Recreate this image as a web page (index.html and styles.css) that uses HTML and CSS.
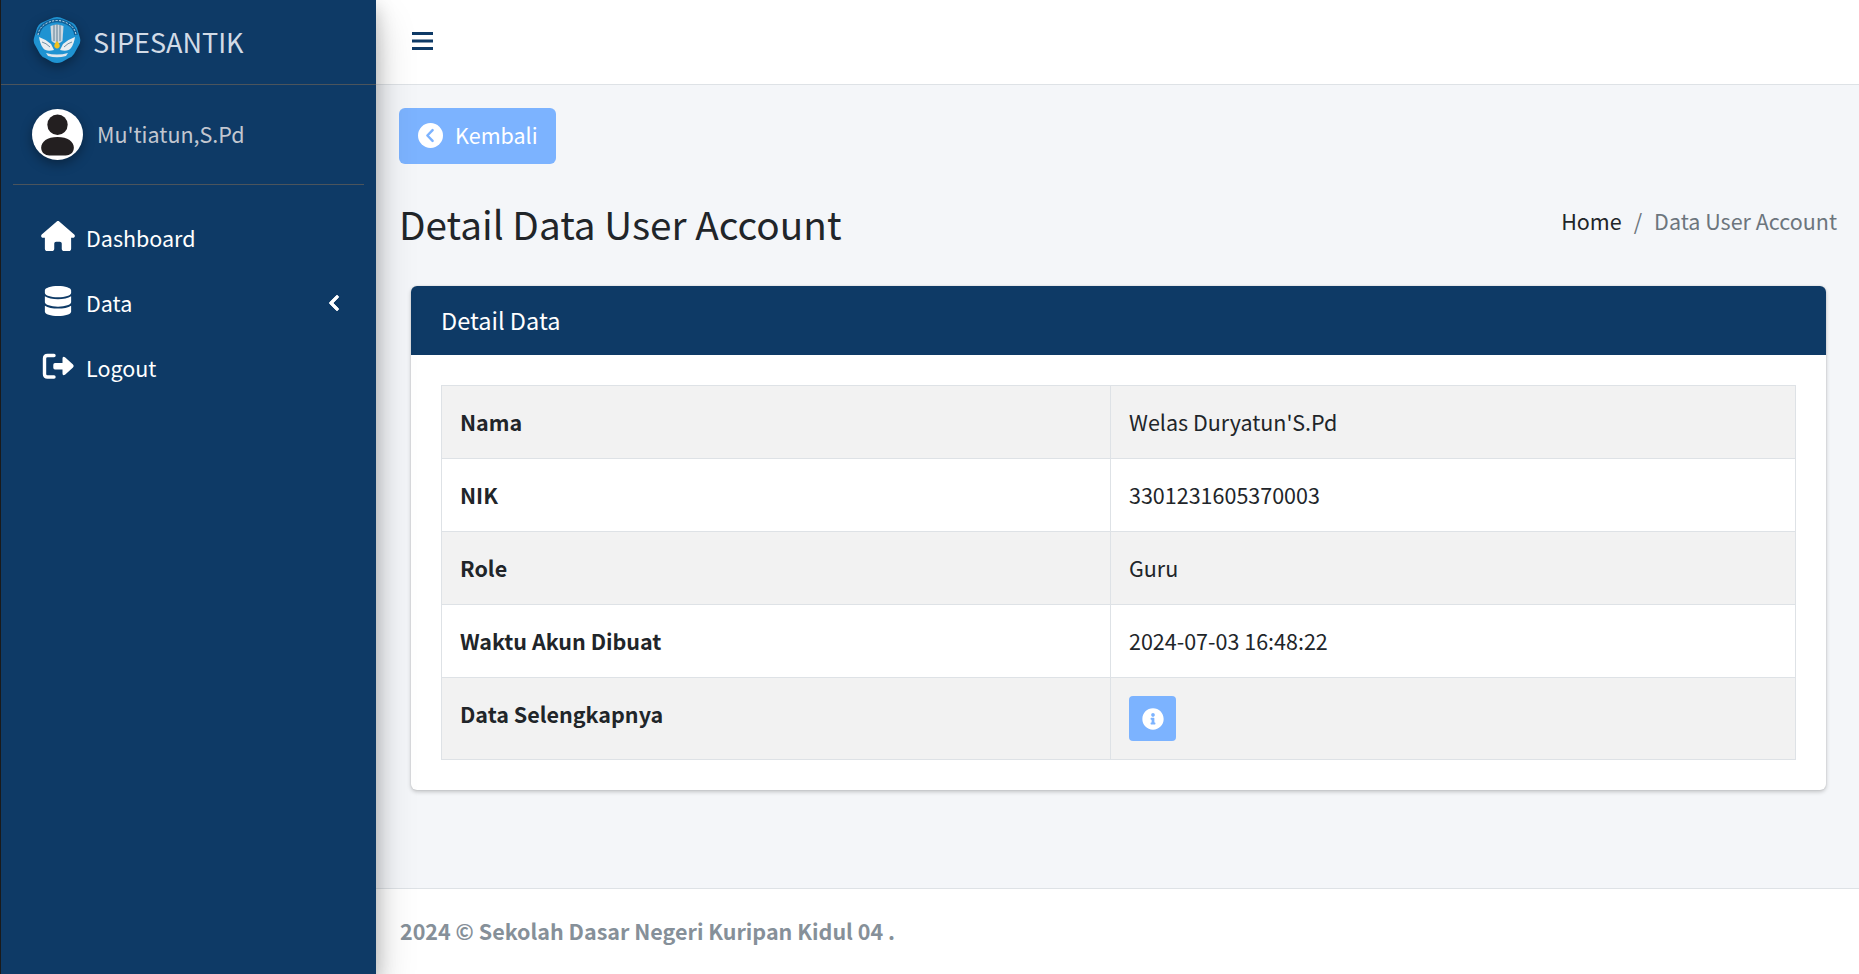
FILE: index.html
```html
<!DOCTYPE html>
<html lang="id">
<head>
<meta charset="utf-8">
<title>SIPESANTIK</title>
<link rel="stylesheet" href="styles.css">
</head>
<body>
<div class="app">
  <aside class="sidebar">
    <div class="brand">
      <svg class="brand-logo" viewBox="0 0 48 48" aria-hidden="true">
        <path d="M24 1 Q27 1 31 3 L40 7 Q43 9 44 12 L47 22 Q48 26 46 29 L41 38 Q39 41 36 42 L29 46 Q24 48 19 46 L12 42 Q9 41 7 38 L2 29 Q0 26 1 22 L4 12 Q5 9 8 7 L17 3 Q21 1 24 1 Z" fill="#1f93d2"/>
        <path d="M5 19 Q6 11 14 7 Q24 2 34 7 Q42 11 43 19" fill="none" stroke="#0f5f96" stroke-width="3.500"/>
        <path d="M5 19 Q6 11 14 7 Q24 2 34 7 Q42 11 43 19" fill="none" stroke="#cfe4f1" stroke-width="1" stroke-dasharray="2 1.500"/>
        <path d="M17.500 10 Q24 7 30.500 10 L29.500 25 Q24 30 18.500 25 Z" fill="#cfd8df"/>
        <path d="M21 9 V25 M24 8 V27 M27 9 V25" stroke="#5f7f95" stroke-width="1"/>
        <path d="M6 21 Q12 23 18 28 L21 34 Q13 36 10 32 Q7 28 6 21 Z" fill="#e9edf0"/>
        <path d="M42 21 Q36 23 30 28 L27 34 Q35 36 38 32 Q41 28 42 21 Z" fill="#e9edf0"/>
        <path d="M9 26 Q13 27 17 31 M39 26 Q35 27 31 31" stroke="#6f8ea3" stroke-width="1" fill="none"/>
        <path d="M24 25 Q27.500 28.500 26.500 31 Q24 34 21.500 31 Q20.500 28.500 24 25 Z" fill="#f2c11e"/>
        <path d="M13 37 Q24 40 35 37 L33 40 Q24 42.500 15 40 Z" fill="#dfe6ec"/>
      </svg>
      <span class="brand-text">SIPESANTIK</span>
    </div>
    <div class="user">
      <svg class="avatar" viewBox="0 0 50 50" aria-hidden="true">
        <circle cx="25" cy="25" r="25" fill="#fff"/>
        <circle cx="25" cy="15.500" r="10" fill="#231f20"/>
        <path d="M25 27.500 C15 27.500 9 32 9 38 C9 43 13 45.500 17 45.500 H33 C37 45.500 41 43 41 38 C41 32 35 27.500 25 27.500 Z" fill="#231f20"/>
      </svg>
      <span class="user-name">Mu'tiatun,S.Pd</span>
    </div>
    <nav class="nav">
      <a class="nav-item">
        <svg class="nav-icon" viewBox="0 0 576 512"><path fill="currentColor" d="M575.800 255.500c0 18-15 32.100-32 32.100h-32l.7 160.200c0 2.700-.2 5.400-.5 8.100V472c0 22.100-17.900 40-40 40H456c-1.100 0-2.200 0-3.300-.1-1.400.1-2.800.1-4.200.1H416 392c-22.100 0-40-17.900-40-40V448 384c0-17.700-14.300-32-32-32H256c-17.700 0-32 14.300-32 32v64 24c0 22.100-17.900 40-40 40H160 128.100c-1.500 0-3-.1-4.500-.2-1.200.1-2.400.2-3.600.2H104c-22.100 0-40-17.900-40-40V360c0-.9 0-1.900.1-2.800V287.600H32c-18 0-32-14-32-32.100 0-9 3-17 10-24L266.400 8c7-7 15-8 22-8s15 2 21 7L564.800 231.500c8 7 12 15 11 24z"/></svg>
        <span>Dashboard</span>
      </a>
      <a class="nav-item">
        <svg class="nav-icon" viewBox="0 0 448 512"><path fill="currentColor" d="M448 73.143v45.714C448 159.143 347.667 192 224 192S0 159.143 0 118.857V73.143C0 32.857 100.333 0 224 0s224 32.857 224 73.143zM448 176v102.857C448 319.143 347.667 352 224 352S0 319.143 0 278.857V176c48.125 33.143 136.208 48.572 224 48.572S399.874 209.143 448 176zm0 160v102.857C448 479.143 347.667 512 224 512S0 479.143 0 438.857V336c48.125 33.143 136.208 48.572 224 48.572S399.874 369.143 448 336z"/></svg>
        <span>Data</span>
        <svg class="nav-caret" viewBox="0 0 320 512"><path fill="currentColor" stroke="currentColor" stroke-width="24" stroke-linejoin="round" d="M34.520 239.030L228.870 44.690c9.370-9.370 24.570-9.370 33.940 0l22.670 22.670c9.360 9.360 9.370 24.520.04 33.900L131.490 256l154.020 154.750c9.340 9.380 9.320 24.540-.04 33.900l-22.670 22.670c-9.370 9.370-24.570 9.370-33.940 0L34.520 272.970c-9.370-9.370-9.370-24.570 0-33.940z"/></svg>
      </a>
      <a class="nav-item">
        <svg class="nav-icon" viewBox="0 0 34 30">
          <path d="M13 4.500H6.500Q3.500 4.500 3.500 7.500V23Q3.500 26 6.500 26H13" fill="none" stroke="currentColor" stroke-width="3.400" stroke-linecap="round"/>
          <path fill="currentColor" d="M14 12h7.500V7.500q0-2.500 2.500-1.200l8 7.200q1.500 1.500 0 3l-8 7.200q-2.500 1.300-2.500-1.200V18.500H14q-1.700 0-1.700-1.700v-3.100Q12.300 12 14 12z"/>
        </svg>
        <span>Logout</span>
      </a>
    </nav>
  </aside>
  <div class="main">
    <header class="topbar">
      <svg class="menu-icon" viewBox="0 0 21 18" aria-hidden="true"><path fill="currentColor" d="M0 0h21v3H0zM0 7.500h21v3H0zM0 15h21v3H0z"/></svg>
    </header>
    <main class="content">
      <a class="btn-back">
        <svg class="btn-back-icon" viewBox="0 0 24 24"><circle cx="12" cy="12" r="12" fill="#fff"/><path d="M14 6.800 9 12l5 5.200" fill="none" stroke="#7cb3ff" stroke-width="2.400" stroke-linecap="round" stroke-linejoin="round"/></svg>
        <span class="btn-back-text">Kembali</span>
      </a>
      <div class="page-head">
        <h1 class="page-title">Detail Data User Account</h1>
        <div class="crumbs"><span class="crumb-link">Home</span><span class="crumb-sep">/</span><span>Data User Account</span></div>
      </div>
      <section class="card">
        <div class="card-head">Detail Data</div>
        <div class="card-body">
          <table class="detail">
            <tr><th>Nama</th><td>Welas Duryatun'S.Pd</td></tr>
            <tr><th>NIK</th><td>3301231605370003</td></tr>
            <tr><th>Role</th><td>Guru</td></tr>
            <tr><th>Waktu Akun Dibuat</th><td>2024-07-03 16:48:22</td></tr>
            <tr><th>Data Selengkapnya</th><td><a class="btn-info"><svg viewBox="0 0 512 512"><path fill="#fff" d="M256 8C119.043 8 8 119.083 8 256c0 136.997 111.043 248 248 248s248-111.003 248-248C504 119.083 392.957 8 256 8zm0 110c23.196 0 42 18.804 42 42s-18.804 42-42 42-42-18.804-42-42 18.804-42 42-42zm56 254c0 6.627-5.373 12-12 12h-88c-6.627 0-12-5.373-12-12v-24c0-6.627 5.373-12 12-12h12v-64h-12c-6.627 0-12-5.373-12-12v-24c0-6.627 5.373-12 12-12h64c6.627 0 12 5.373 12 12v100h12c6.627 0 12 5.373 12 12v24z"/></svg></a></td></tr>
          </table>
        </div>
      </section>
    </main>
    <footer class="footer">2024 © Sekolah Dasar Negeri Kuripan Kidul 04 .</footer>
  </div>
</div>
</body>
</html>
```

FILE: styles.css
```css
* { box-sizing: border-box; }
html, body { margin: 0; height: 100%; }
body {
  font-family: "Noto Sans CJK SC", "Noto Sans", sans-serif;
  font-size: 21.5px;
  line-height: 36px;
  color: #212529;
  background: #f4f6f9;
  overflow: hidden;
}
.app { display: flex; height: 974px; }
.sidebar {
  width: 376px;
  flex: none;
  background: #0e3a66;
  border-left: 1px solid #1a1a1a;
  box-shadow: 0 21px 39px rgba(0,0,0,.2), 0 7px 18px rgba(0,0,0,.22);
  position: relative;
  z-index: 2;
}
.brand {
  height: 85px;
  display: flex;
  align-items: center;
  padding: 0 0 0 32px;
  gap: 12px;
  border-bottom: 1px solid #4b545c;
}
.brand-logo { width: 48px; height: 48px; margin-top: -4px; filter: drop-shadow(0 4px 6px rgba(0,0,0,.35)); }
.brand-text { font-size: 27px; color: #d2dbe6; }
.user {
  height: 100px;
  margin: 0 12px;
  padding: 0 0 1px 19px;
  display: flex;
  align-items: center;
  gap: 14px;
  border-bottom: 1px solid #4b545c;
}
.avatar { width: 51px; height: 51px; filter: drop-shadow(0 4px 6px rgba(0,0,0,.35)); }
.user-name { color: #c2c7d0; }
.nav { padding-top: 20px; display: flex; flex-direction: column; }
.nav-item {
  height: 65px;
  display: flex;
  align-items: center;
  padding-left: 40px;
  color: #fff;
}
.nav-icon { width: 34px; height: 30px; margin: -3px 11px 0 0; }
.nav-caret { width: 18px; height: 18px; margin: 0 33px 0 auto; }
.main { flex: 1; min-width: 0; display: flex; flex-direction: column; }
.topbar {
  height: 85px;
  background: #fff;
  border-bottom: 1px solid #dee2e6;
  display: flex;
  align-items: center;
  padding: 0 0 2px 36px;
  color: #0e3a66;
}
.menu-icon { width: 21px; height: 18px; }
.content { flex: 1; padding: 23px 22px 0 23px; }
.btn-back {
  display: inline-flex;
  align-items: center;
  gap: 12px;
  width: 157px;
  height: 56px;
  padding: 0 0 0 19px;
  background: #7cb3ff;
  color: #fff;
  border-radius: 6px;
}
.btn-back-icon { width: 25px; height: 25px; margin-top: -1px; }
.btn-back-text { margin-top: -2px; }
.page-head {
  display: flex;
  justify-content: space-between;
  align-items: center;
  margin-top: 26px;
  height: 66px;
}
.page-title { margin: 0; font-size: 38.700px; font-weight: 400; line-height: 66px; }
.crumbs { color: #6c757d; margin-top: -4px; }
.crumb-link { color: #212529; }
.crumb-sep { padding: 0 12px; }
.card {
  margin: 30px 11px 0 12px;
  background: #fff;
  border-radius: 6px;
  box-shadow: 0 0 2px rgba(0,0,0,.125), 0 2px 4px rgba(0,0,0,.2);
  overflow: hidden;
}
.card-head {
  height: 69px;
  display: flex;
  align-items: center;
  padding-left: 30px;
  padding-bottom: 2px;
  background: #0e3a66;
  color: #fff;
  font-size: 23.500px;
}
.card-body { padding: 30px; }
.detail { width: 100%; border-collapse: collapse; table-layout: fixed; }
.detail th, .detail td {
  border: 1px solid #dee2e6;
  padding: 18px;
  vertical-align: top;
  text-align: left;
}
.detail th { width: 669px; font-weight: 700; }
.detail tr:nth-child(odd) { background: #f2f2f2; }
.btn-info {
  display: flex;
  width: 47px;
  height: 45px;
  align-items: center;
  justify-content: center;
  background: #7cb3ff;
  border-radius: 4px;
}
.btn-info svg { width: 22px; height: 22px; }
.footer {
  height: 86px;
  background: #fff;
  border-top: 1px solid #dee2e6;
  display: flex;
  align-items: center;
  padding: 0 0 1px 24px;
  color: #869099;
  font-weight: 700;
}
```
